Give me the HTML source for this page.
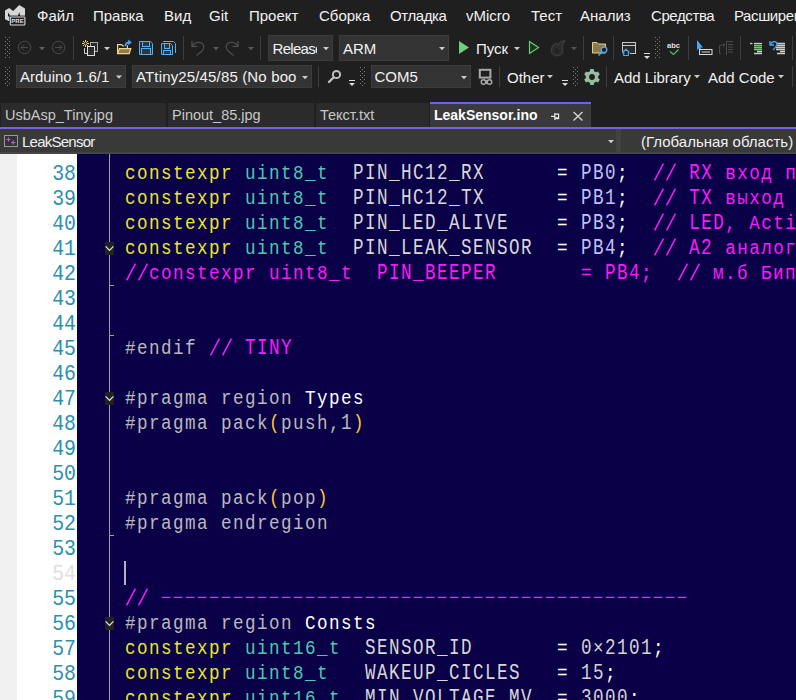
<!DOCTYPE html>
<html><head><meta charset="utf-8">
<style>
*{margin:0;padding:0;box-sizing:border-box}
html,body{width:796px;height:700px;overflow:hidden;background:#1f1f1f}
body{position:relative;font-family:"Liberation Sans",sans-serif;font-size:15px;color:#f1f1f1}
.a{position:absolute;white-space:pre;line-height:18px}
.cb{position:absolute;background:#333333;border:1px solid #3c3c3c;overflow:hidden}
.cb span{position:absolute;white-space:pre;line-height:18px}
.tab{position:absolute;top:103px;height:24px;background:#2b2b2b;overflow:hidden}
.tab span{position:absolute;white-space:pre;line-height:18px;color:#c8c8c8;font-size:14.5px}
svg{position:absolute;overflow:visible}
#ed{position:absolute;left:0;top:154px;width:796px;height:546px;background:#0a0048;overflow:hidden}
.ln{position:absolute;left:17px;width:59px;text-align:right;font-family:"Liberation Mono",monospace;font-size:22px;line-height:25px;height:25px;color:#2b91af;transform:scaleX(0.9);transform-origin:100% 0}
.cl{position:absolute;left:125px;font-family:"Liberation Mono",monospace;font-size:20px;line-height:25px;height:25px;white-space:pre;color:#d8d6d6;transform:scaleX(0.88);transform-origin:0 0;letter-spacing:1.6364px}
.u{display:inline-block;transform:scaleY(1.13);transform-origin:0 18px}.k{color:#e8e82a}.t{color:#4ec9b0}.c{color:#f81cf8}.p{color:#bababa}.w{color:#ffffff}.o{color:#ffc83c}.v{color:#c0c0fa}.n{color:#d6d2d2}.s{color:#ffffff}
</style></head><body>

<svg style="left:0;top:0" width="32" height="32" viewBox="0 0 32 32">
<path d="M5 10.4 L9.2 8 L13.2 11 L19.2 5 L25 8.4 L25 15.8 L9.8 15.8 L9.8 21.6 L5 19.2 Z" fill="#d6d6d6"/>
<path d="M8 12.6 L8 16.8 L10.2 15.6 Z M19.3 12.2 L17.8 15.9 L20.2 15.9 Z" fill="#1f1f1f"/>
<rect x="9.3" y="15.8" width="16.5" height="10" fill="#1f1f1f"/>
<rect x="10.3" y="17" width="14.6" height="8" rx="0.8" fill="#1f1f1f" stroke="#dcdcdc" stroke-width="1.1"/>
<text x="17.5" y="23.2" font-family="Liberation Sans" font-size="6" font-weight="bold" fill="#e0e0e0" text-anchor="middle">PRE</text>
</svg>
<div class="a" style="left:37px;top:7px;">Файл</div>
<div class="a" style="left:93px;top:7px;">Правка</div>
<div class="a" style="left:164px;top:7px;">Вид</div>
<div class="a" style="left:209px;top:7px;">Git</div>
<div class="a" style="left:249px;top:7px;">Проект</div>
<div class="a" style="left:319px;top:7px;">Сборка</div>
<div class="a" style="left:390px;top:7px;letter-spacing:-0.4px">Отладка</div>
<div class="a" style="left:466px;top:7px;">vMicro</div>
<div class="a" style="left:531px;top:7px;">Тест</div>
<div class="a" style="left:580px;top:7px;">Анализ</div>
<div class="a" style="left:651px;top:7px;letter-spacing:-0.4px">Средства</div>
<div class="a" style="left:734px;top:7px;letter-spacing:-0.4px">Расширения</div>
<svg style="left:0;top:0" width="796" height="100" fill="#7a7a7a">
<rect x="5" y="37" width="1" height="1"/><rect x="9" y="37" width="1" height="1"/><rect x="7" y="39" width="1" height="1"/><rect x="5" y="41" width="1" height="1"/><rect x="9" y="41" width="1" height="1"/><rect x="7" y="43" width="1" height="1"/><rect x="5" y="45" width="1" height="1"/><rect x="9" y="45" width="1" height="1"/><rect x="7" y="47" width="1" height="1"/><rect x="5" y="49" width="1" height="1"/><rect x="9" y="49" width="1" height="1"/><rect x="7" y="51" width="1" height="1"/><rect x="5" y="53" width="1" height="1"/><rect x="9" y="53" width="1" height="1"/><rect x="7" y="55" width="1" height="1"/><rect x="5" y="57" width="1" height="1"/><rect x="9" y="57" width="1" height="1"/>
<rect x="5" y="67" width="1" height="1"/><rect x="9" y="67" width="1" height="1"/><rect x="7" y="69" width="1" height="1"/><rect x="5" y="71" width="1" height="1"/><rect x="9" y="71" width="1" height="1"/><rect x="7" y="73" width="1" height="1"/><rect x="5" y="75" width="1" height="1"/><rect x="9" y="75" width="1" height="1"/><rect x="7" y="77" width="1" height="1"/><rect x="5" y="79" width="1" height="1"/><rect x="9" y="79" width="1" height="1"/><rect x="7" y="81" width="1" height="1"/><rect x="5" y="83" width="1" height="1"/><rect x="9" y="83" width="1" height="1"/><rect x="7" y="85" width="1" height="1"/>
<rect x="655" y="37" width="1" height="1"/><rect x="659" y="37" width="1" height="1"/><rect x="657" y="39" width="1" height="1"/><rect x="655" y="41" width="1" height="1"/><rect x="659" y="41" width="1" height="1"/><rect x="657" y="43" width="1" height="1"/><rect x="655" y="45" width="1" height="1"/><rect x="659" y="45" width="1" height="1"/><rect x="657" y="47" width="1" height="1"/><rect x="655" y="49" width="1" height="1"/><rect x="659" y="49" width="1" height="1"/><rect x="657" y="51" width="1" height="1"/><rect x="655" y="53" width="1" height="1"/><rect x="659" y="53" width="1" height="1"/><rect x="657" y="55" width="1" height="1"/><rect x="655" y="57" width="1" height="1"/><rect x="659" y="57" width="1" height="1"/>
<rect x="360" y="67" width="1" height="1"/><rect x="364" y="67" width="1" height="1"/><rect x="362" y="69" width="1" height="1"/><rect x="360" y="71" width="1" height="1"/><rect x="364" y="71" width="1" height="1"/><rect x="362" y="73" width="1" height="1"/><rect x="360" y="75" width="1" height="1"/><rect x="364" y="75" width="1" height="1"/><rect x="362" y="77" width="1" height="1"/><rect x="360" y="79" width="1" height="1"/><rect x="364" y="79" width="1" height="1"/><rect x="362" y="81" width="1" height="1"/><rect x="360" y="83" width="1" height="1"/><rect x="364" y="83" width="1" height="1"/><rect x="362" y="85" width="1" height="1"/>
<rect x="573" y="67" width="1" height="1"/><rect x="577" y="67" width="1" height="1"/><rect x="575" y="69" width="1" height="1"/><rect x="573" y="71" width="1" height="1"/><rect x="577" y="71" width="1" height="1"/><rect x="575" y="73" width="1" height="1"/><rect x="573" y="75" width="1" height="1"/><rect x="577" y="75" width="1" height="1"/><rect x="575" y="77" width="1" height="1"/><rect x="573" y="79" width="1" height="1"/><rect x="577" y="79" width="1" height="1"/><rect x="575" y="81" width="1" height="1"/><rect x="573" y="83" width="1" height="1"/><rect x="577" y="83" width="1" height="1"/><rect x="575" y="85" width="1" height="1"/>
</svg>
<svg style="left:0;top:0" width="796" height="160" fill="none" stroke="#4a4a4a" stroke-width="1">
<circle cx="24.5" cy="47.5" r="6.2"/>
<path d="M21 47.5 H28 M24 44.5 L21 47.5 L24 50.5"/>
<circle cx="58.5" cy="47.5" r="6.2"/>
<path d="M55 47.5 H62 M59 44.5 L62 47.5 L59 50.5"/>
</svg>
<svg style="left:0;top:0" width="796" height="160"><path d="M39.0 47 L45.0 47 L42 50.2 Z" fill="#606060"/></svg>
<div style="position:absolute;left:73px;top:36px;width:1px;height:24px;background:#3d3d3d"></div>
<svg style="left:0;top:0" width="796" height="160">
<rect x="90.5" y="42.5" width="7" height="9" fill="#2a2a2a" stroke="#a8a8a8" stroke-width="1"/>
<path d="M84.5 48 V53.5 H87.5" fill="none" stroke="#d0d0d0" stroke-width="1"/>
<rect x="87.5" y="46.5" width="7" height="9" fill="#2e2e2e" stroke="#e0e0e0" stroke-width="1"/>
<g stroke="#f5d57a" stroke-width="1"><path d="M85.5 40 V47 M82 43.5 H89 M83 41 L88 46 M88 41 L83 46"/></g>
<circle cx="85.5" cy="43.5" r="1.2" fill="#1f1f1f"/>
</svg>
<svg style="left:0;top:0" width="796" height="160"><path d="M104.0 47 L110.0 47 L107 50.2 Z" fill="#cccccc"/></svg>
<svg style="left:0;top:0" width="796" height="160">
<path d="M117.6 53.6 V44.6 H121.6 L122.8 45.8 H123.8" fill="none" stroke="#f5d58a" stroke-width="1.2"/>
<path d="M127.4 45.3 V48.3" stroke="#f5d58a" stroke-width="1.2"/>
<path d="M117.6 53.6 L119.4 48.6 H130.8 L129.2 53.6 Z" fill="#8b7a52" stroke="#f5d58a" stroke-width="1.2"/>
<path d="M125.4 46.2 C125.4 43.6 127 42.4 129.3 42.4" fill="none" stroke="#4aa8f0" stroke-width="1.7"/>
<path d="M128.2 39.6 L131.8 42.4 L128.2 45.2 Z" fill="#4aa8f0"/>
</svg>
<svg style="left:0;top:0" width="796" height="160"><path d="M139.5 41.5 H150.5 L152.5 43.5 V54.5 H139.5 Z" fill="#2a2a2a" stroke="#55b0f0" stroke-width="1"/>
<rect x="142.5" y="41.5" width="7" height="5" fill="#2e3640" stroke="#55b0f0" stroke-width="1"/>
<rect x="141.5" y="48.5" width="9" height="6" fill="#2e3640" stroke="#55b0f0" stroke-width="1"/><path d="M161.5 43.5 H170.5 L172.5 45.5 V54.5 H161.5 Z" fill="#2a2a2a" stroke="#55b0f0" stroke-width="1"/>
<rect x="164.5" y="43.5" width="5" height="5" fill="#2e3640" stroke="#55b0f0" stroke-width="1"/>
<rect x="163.5" y="50.5" width="7" height="4" fill="#2e3640" stroke="#55b0f0" stroke-width="1"/><path d="M163 41.5 H173.5 L175.5 43.5 V53" fill="none" stroke="#55b0f0" stroke-width="1"/></svg>
<div style="position:absolute;left:183px;top:36px;width:1px;height:24px;background:#3d3d3d"></div>
<svg style="left:0;top:0" width="796" height="160" fill="none" stroke="#555555" stroke-width="1.1">
<path d="M192 41 V46.5 H197.5"/>
<path d="M192.5 46 C195 41.5 201 41 203.5 45 C205 48 203 50.5 196.5 55.5"/>
<path d="M238 41 V46.5 H232.5"/>
<path d="M237.5 46 C235 41.5 229 41 226.5 45 C225 48 227 50.5 233.5 55.5"/>
</svg>
<svg style="left:0;top:0" width="796" height="160"><path d="M213.0 47 L219.0 47 L216 50.2 Z" fill="#5a5a5a"/></svg>
<svg style="left:0;top:0" width="796" height="160"><path d="M248.0 47 L254.0 47 L251 50.2 Z" fill="#5a5a5a"/></svg>
<div style="position:absolute;left:260px;top:36px;width:1px;height:24px;background:#3d3d3d"></div>
<div class="cb" style="left:268px;top:35px;width:65px;height:26px"><span style="left:3.5px;top:4px;width:44.3px;overflow:hidden;letter-spacing:-0.7px">Release</span></div>
<svg style="left:0;top:0" width="796" height="160"><path d="M323.0 47 L329.0 47 L326 50.2 Z" fill="#cccccc"/></svg>
<div class="cb" style="left:339px;top:35px;width:110px;height:26px"><span style="left:3px;top:4px">ARM</span></div>
<svg style="left:0;top:0" width="796" height="160"><path d="M439.0 47 L445.0 47 L442 50.2 Z" fill="#cccccc"/></svg>
<svg style="left:0;top:0" width="796" height="160">
<path d="M459 41 L469 47.5 L459 54 Z" fill="#6fcf78"/>
<path d="M529.5 41.5 L538.5 47.5 L529.5 53.5 Z" fill="#1e3322" stroke="#63d06c" stroke-width="1.2"/>
<path d="M554.5 44 C552 46 551.3 48.5 551.3 50.5 C551.3 53.8 553.8 55.8 557 55.8 C560.4 55.8 562.7 53.4 562.7 50.5 C562.7 48.5 562 47 562.5 45.3 C563 43.5 564 41.8 564.8 40.6 C562 40.8 559.5 42.2 558 44.8 C557.3 43.8 556 43.4 554.5 44 Z" fill="#2c2c2c" stroke="#3c3c3c" stroke-width="1.3"/><ellipse cx="556.8" cy="51" rx="2.3" ry="2.8" fill="#232323"/>
</svg>
<div class="a" style="left:476px;top:40px;">Пуск</div>
<svg style="left:0;top:0" width="796" height="160"><path d="M514.0 47 L520.0 47 L517 50.2 Z" fill="#cccccc"/></svg>
<svg style="left:0;top:0" width="796" height="160"><path d="M571.0 47 L577.0 47 L574 50.2 Z" fill="#555555"/></svg>
<div style="position:absolute;left:583px;top:36px;width:1px;height:24px;background:#3d3d3d"></div>
<svg style="left:0;top:0" width="796" height="160">
<path d="M592.5 42.5 H597 L598.5 44 H605.5 V53 H592.5 Z" fill="#8a7a50" stroke="#f0d084" stroke-width="1"/>
<circle cx="604" cy="49.8" r="2.8" fill="#1f1f1f" stroke="#4aa8f0" stroke-width="1.4"/>
<path d="M602 52 L598.5 55.5" stroke="#4aa8f0" stroke-width="1.4"/>
</svg>
<div style="position:absolute;left:613px;top:36px;width:1px;height:24px;background:#3d3d3d"></div>
<svg style="left:0;top:0" width="796" height="160">
<rect x="622.5" y="42.5" width="13" height="11" fill="#2a2a2a" stroke="#c8c8c8" stroke-width="1"/>
<path d="M622.5 45.5 H635.5" stroke="#c8c8c8" stroke-width="1"/>
<path d="M622 52.5 L626 49 L630 52.5 V56 H623 Z" fill="#1f1f1f"/>
<path d="M622.5 52.5 L626 49.3 L629.5 52.5 M623.7 51.8 V55.5 H628.3 V51.8" fill="none" stroke="#4aa8f0" stroke-width="1.2"/>
</svg>
<svg style="left:0;top:0" width="796" height="160"><rect x="644" y="53" width="6" height="1" fill="#dddddd"/><path d="M644 56 L650 56 L647 59 Z" fill="#dddddd"/></svg>
<svg style="left:0;top:0" width="796" height="160">
<text x="673.5" y="47.8" font-family="Liberation Sans" font-size="7.5" font-weight="bold" fill="#e0e0e0" text-anchor="middle">abc</text>
<path d="M670 51.5 L673.5 54.5 L678.5 49.5" fill="none" stroke="#50c060" stroke-width="1.2"/>
</svg>
<div style="position:absolute;left:688px;top:36px;width:1px;height:24px;background:#3d3d3d"></div>
<svg style="left:0;top:0" width="796" height="160">
<path d="M697 40 L703 47.5 L700.5 47.5 L701.5 50.5 L700 51 L699 48.5 L697 50 Z" fill="#4aa8f0"/>
<rect x="699.5" y="49.5" width="12.5" height="5" fill="#1f1f1f" stroke="#dddddd" stroke-width="1"/>
<path d="M701.5 52 H710" stroke="#dddddd" stroke-width="1"/>
</svg>
<svg style="left:0;top:0" width="796" height="160" fill="none" stroke="#4a4a4a" stroke-width="1">
<path d="M721 45.5 H719.5 V53.5 H721"/><path d="M721 45 H725 M723.5 43.5 L725 45 L723.5 46.5"/>
<path d="M726.5 41.5 V55 M726.5 41.5 H733 M728 44.5 H733 M728 47 H733 M728 49.5 H733 M728 52 H733"/>
</svg>
<div style="position:absolute;left:740px;top:36px;width:1px;height:24px;background:#3d3d3d"></div>
<svg style="left:0;top:0" width="796" height="160" stroke-width="1.3">
<path d="M750 43.5 H752.5" stroke="#cccccc"/><path d="M754 43.5 H762" stroke="#cccccc"/>
<path d="M754 45.5 H762 M754 47.5 H762 M754 49.5 H762" stroke="#6ccf6c"/>
<path d="M757 51.5 H762 M754 53.5 H762" stroke="#cccccc"/>
<path d="M777 43.5 H785 M777 45.5 H785 M776 47.5 H785 M776 49.5 H785 M780 51.5 H785 M777 53.5 H785" stroke="#cccccc"/>
<path d="M770.5 44 C772 41.5 775 41 776.5 42.5 C778 44.5 776 47 773 50" fill="none" stroke="#4aa8f0" stroke-width="1.3"/>
<path d="M770 41 V45 H774" fill="none" stroke="#4aa8f0" stroke-width="1.3"/>
</svg>
<div style="position:absolute;left:792px;top:36px;width:1px;height:24px;background:#3d3d3d"></div>
<div class="cb" style="left:16px;top:65px;width:110px;height:23px"><span style="left:3px;top:1.5px">Arduino 1.6/1</span></div>
<svg style="left:0;top:0" width="796" height="160"><path d="M116.0 75.5 L122.0 75.5 L119 78.7 Z" fill="#cccccc"/></svg>
<div class="cb" style="left:132px;top:65px;width:180px;height:23px"><span style="left:3px;top:1.5px;letter-spacing:0.15px">ATtiny25/45/85 (No boo</span></div>
<svg style="left:0;top:0" width="796" height="160"><path d="M302.0 76 L308.0 76 L305 79.2 Z" fill="#cccccc"/></svg>
<div style="position:absolute;left:318px;top:66px;width:1px;height:21px;background:#3d3d3d"></div>
<svg style="left:0;top:0" width="796" height="160">
<circle cx="336.5" cy="74.5" r="3.6" fill="none" stroke="#c0c0c0" stroke-width="2"/>
<path d="M333.5 77.5 L329 82" stroke="#c0c0c0" stroke-width="2.4" stroke-linecap="round"/>
</svg>
<svg style="left:0;top:0" width="796" height="160"><rect x="349" y="80" width="6" height="1" fill="#dddddd"/><path d="M349 83 L355 83 L352 86 Z" fill="#dddddd"/></svg>
<div class="cb" style="left:371px;top:65px;width:100px;height:23px"><span style="left:2.5px;top:1.5px">COM5</span></div>
<svg style="left:0;top:0" width="796" height="160"><path d="M461.0 76 L467.0 76 L464 79.2 Z" fill="#cccccc"/></svg>
<svg style="left:0;top:0" width="796" height="160">
<rect x="479.8" y="69.8" width="10.6" height="7.8" fill="#1f1f1f" stroke="#a8a8a8" stroke-width="2"/>
<circle cx="483.5" cy="82" r="2.3" fill="none" stroke="#a8a8a8" stroke-width="1.4"/>
<circle cx="489.5" cy="82" r="2.3" fill="none" stroke="#a8a8a8" stroke-width="1.4"/>
<ellipse cx="486.5" cy="82" rx="1.6" ry="2.1" fill="#a8a8a8"/>
</svg>
<div style="position:absolute;left:499px;top:66px;width:1px;height:21px;background:#3d3d3d"></div>
<div class="a" style="left:507px;top:69px;">Other</div>
<svg style="left:0;top:0" width="796" height="160"><path d="M547.0 75 L553.0 75 L550 78.2 Z" fill="#cccccc"/></svg>
<svg style="left:0;top:0" width="796" height="160"><rect x="562" y="80" width="6" height="1" fill="#dddddd"/><path d="M562 83 L568 83 L565 86 Z" fill="#dddddd"/></svg>
<svg style="left:0;top:0" width="796" height="160">
<path d="M590.30 68.98 L593.70 68.98 L594.12 71.17 L595.99 72.25 L598.09 71.51 L599.80 74.47 L598.11 75.92 L598.11 78.08 L599.80 79.53 L598.09 82.49 L595.99 81.75 L594.12 82.83 L593.70 85.02 L590.30 85.02 L589.88 82.83 L588.01 81.75 L585.91 82.49 L584.20 79.53 L585.89 78.08 L585.89 75.92 L584.20 74.47 L585.91 71.51 L588.01 72.25 L589.88 71.17 Z M594.9 77 A2.9 2.9 0 1 0 589.1 77 A2.9 2.9 0 1 0 594.9 77 Z" fill="#96bea6" fill-rule="evenodd"/>
</svg>
<div style="position:absolute;left:606px;top:66px;width:1px;height:21px;background:#3d3d3d"></div>
<div class="a" style="left:614px;top:69px;">Add Library</div>
<svg style="left:0;top:0" width="796" height="160"><path d="M694.0 75 L700.0 75 L697 78.2 Z" fill="#cccccc"/></svg>
<div class="a" style="left:708px;top:69px;">Add Code</div>
<svg style="left:0;top:0" width="796" height="160"><path d="M778.0 75 L784.0 75 L781 78.2 Z" fill="#cccccc"/></svg>
<div style="position:absolute;left:792px;top:66px;width:1px;height:21px;background:#3d3d3d"></div>
<div class="tab" style="left:1px;width:165px"><span style="left:4px;top:3px">UsbAsp_Tiny.jpg</span></div>
<div class="tab" style="left:168px;width:146px"><span style="left:4px;top:3px">Pinout_85.jpg</span></div>
<div class="tab" style="left:316px;width:113px"><span style="left:4px;top:3px">Текст.txt</span></div>
<div class="tab" style="left:430px;top:102px;width:161px;height:25px;background:#3a3a3a;border-top:2px solid #7160e8"><span style="left:4px;top:2px;color:#ffffff;font-weight:bold;font-size:14px">LeakSensor.ino</span></div>
<svg style="left:0;top:0" width="796" height="160">
<path d="M551 116.3 H554.5 M554.8 113 V120 M554.8 114.2 H558.6 V118.6 H554.8" fill="none" stroke="#e6e6e6" stroke-width="1.2"/><rect x="555" y="117.2" width="3.6" height="1.6" fill="#e6e6e6"/>
<path d="M573.5 112 L582.5 120.5 M582.5 112 L573.5 120.5" stroke="#d8d8d8" stroke-width="1.3"/>
</svg>
<div style="position:absolute;left:0;top:127px;width:796px;height:2px;background:#7160e8"></div>
<div style="position:absolute;left:0;top:129px;width:796px;height:25px;background:#393939"></div>
<div style="position:absolute;left:616px;top:129px;width:5px;height:23px;background:#424242"></div>
<div style="position:absolute;left:0;top:152px;width:796px;height:2px;background:#454545"></div>
<svg style="left:0;top:0" width="796" height="160">
<rect x="4.5" y="135.5" width="13" height="11" fill="#333" stroke="#9a9a9a" stroke-width="1"/>
<path d="M6.5 139.5 H10.5 M8.5 137.5 V141.5 M11 142.5 H15.5 M13.2 140.3 V144.7" stroke="#c060d8" stroke-width="1.1"/>
</svg>
<div class="a" style="left:22px;top:133px;letter-spacing:-0.75px">LeakSensor</div>
<svg style="left:0;top:0" width="796" height="160"><path d="M608.0 140 L614.0 140 L611 143.2 Z" fill="#cccccc"/></svg>
<div class="a" style="left:641px;top:133px;">(Глобальная область)</div>
<div id="ed">
<div style="position:absolute;left:0;top:0;width:17px;height:546px;background:#f0f0f0"></div>
<div style="position:absolute;left:17px;top:0;width:60px;height:546px;background:#ffffff"></div>
<div class="ln" style="top:8px"><span>38</span></div>
<div class="cl" style="top:7px"><span class="k">constexpr</span> <span class="t">uint8_t</span>  <span class="u">PIN_HC12_RX</span>      <span class="s">=</span> <span class="v"><span class="u">PB0</span></span><span class="s">;</span>  <span class="c">   <span class="u">RX</span> вход п</span></div>
<div class="ln" style="top:33px"><span>39</span></div>
<div class="cl" style="top:32px"><span class="k">constexpr</span> <span class="t">uint8_t</span>  <span class="u">PIN_HC12_TX</span>      <span class="s">=</span> <span class="v"><span class="u">PB1</span></span><span class="s">;</span>  <span class="c">   <span class="u">TX</span> выход</span></div>
<div class="ln" style="top:58px"><span>40</span></div>
<div class="cl" style="top:57px"><span class="k">constexpr</span> <span class="t">uint8_t</span>  <span class="u">PIN_LED_ALIVE</span>    <span class="s">=</span> <span class="v"><span class="u">PB3</span></span><span class="s">;</span>  <span class="c">   <span class="u">LED</span>, Acti</span></div>
<div class="ln" style="top:83px"><span>41</span></div>
<div class="cl" style="top:82px"><span class="k">constexpr</span> <span class="t">uint8_t</span>  <span class="u">PIN_LEAK_SENSOR</span>  <span class="s">=</span> <span class="v"><span class="u">PB4</span></span><span class="s">;</span>  <span class="c">   <span class="u">A2</span> аналог</span></div>
<div class="ln" style="top:108px"><span>42</span></div>
<div class="cl" style="top:107px"><span class="c">  constexpr uint8_t  <span class="u">PIN_BEEPER</span>       = <span class="u">PB4</span>;     м.б Бип</span></div>
<div class="ln" style="top:133px"><span>43</span></div>
<div class="ln" style="top:158px"><span>44</span></div>
<div class="ln" style="top:183px"><span>45</span></div>
<div class="cl" style="top:182px"><span class="p">#endif</span> <span class="c">   <span class="u">TINY</span></span></div>
<div class="ln" style="top:208px"><span>46</span></div>
<div class="ln" style="top:233px"><span>47</span></div>
<div class="cl" style="top:232px"><span class="p">#pragma region</span> <span class="w">Types</span></div>
<div class="ln" style="top:258px"><span>48</span></div>
<div class="cl" style="top:257px"><span class="p">#pragma pack</span><span class="o">(</span><span class="p">push,<span class="u">1</span></span><span class="o">)</span></div>
<div class="ln" style="top:283px"><span>49</span></div>
<div class="ln" style="top:308px"><span>50</span></div>
<div class="ln" style="top:333px"><span>51</span></div>
<div class="cl" style="top:332px"><span class="p">#pragma pack</span><span class="o">(</span><span class="p">pop</span><span class="o">)</span></div>
<div class="ln" style="top:358px"><span>52</span></div>
<div class="cl" style="top:357px"><span class="p">#pragma endregion</span></div>
<div class="ln" style="top:383px"><span>53</span></div>
<div class="ln" style="top:408px"><span style="color:#e0e0e0">54</span></div>
<div class="ln" style="top:433px"><span>55</span></div>
<div class="cl" style="top:432px"><span class="c">  </span></div>
<div class="ln" style="top:458px"><span>56</span></div>
<div class="cl" style="top:457px"><span class="p">#pragma region</span> <span class="w">Consts</span></div>
<div class="ln" style="top:483px"><span>57</span></div>
<div class="cl" style="top:482px"><span class="k">constexpr</span> <span class="t">uint16_t</span>  <span class="u">SENSOR_ID</span>       <span class="s">=</span> <span class="n"><span class="u">0</span>×<span class="u">2101</span></span><span class="s">;</span></div>
<div class="ln" style="top:508px"><span>58</span></div>
<div class="cl" style="top:507px"><span class="k">constexpr</span> <span class="t">uint8_t</span>   <span class="u">WAKEUP_CICLES</span>   <span class="s">=</span> <span class="n"><span class="u">15</span></span><span class="s">;</span></div>
<div class="ln" style="top:533px"><span>59</span></div>
<div class="cl" style="top:532px"><span class="k">constexpr</span> <span class="t">uint16_t</span>  <span class="u">MIN_VOLTAGE_MV</span>  <span class="s">=</span> <span class="n"><span class="u">3000</span></span><span class="s">;</span></div>
<svg style="left:0;top:0" width="796" height="546">
<defs><pattern id="dash" x="161.8" y="0" width="12" height="10" patternUnits="userSpaceOnUse"><rect x="0" y="0" width="8.6" height="10" fill="#ff22ff"/></pattern></defs>
<rect x="109" y="0" width="1" height="546" fill="#a0a0a0"/>
<rect x="109" y="131" width="5" height="1" fill="#a0a0a0"/>
<rect x="109" y="181" width="5" height="1" fill="#a0a0a0"/>
<rect x="109" y="381" width="5" height="1" fill="#a0a0a0"/>

<rect x="105" y="88" width="9" height="13" fill="#222222"/><path d="M105.6 92.4 L109.5 96.3 L113.4 92.4" fill="none" stroke="#e8e8e8" stroke-width="1.2"/>
<rect x="105" y="238" width="9" height="13" fill="#222222"/><path d="M105.6 242.4 L109.5 246.3 L113.4 242.4" fill="none" stroke="#e8e8e8" stroke-width="1.2"/>
<rect x="105" y="463" width="9" height="13" fill="#222222"/><path d="M105.6 467.4 L109.5 471.3 L113.4 467.4" fill="none" stroke="#e8e8e8" stroke-width="1.2"/>
<path d="M654.6 26.4 L663.4 9.6" stroke="#f81cf8" stroke-width="1.5"/>
<path d="M666.6 26.4 L675.4 9.6" stroke="#f81cf8" stroke-width="1.5"/>
<path d="M654.6 51.4 L663.4 34.6" stroke="#f81cf8" stroke-width="1.5"/>
<path d="M666.6 51.4 L675.4 34.6" stroke="#f81cf8" stroke-width="1.5"/>
<path d="M654.6 76.4 L663.4 59.6" stroke="#f81cf8" stroke-width="1.5"/>
<path d="M666.6 76.4 L675.4 59.6" stroke="#f81cf8" stroke-width="1.5"/>
<path d="M654.6 101.4 L663.4 84.6" stroke="#f81cf8" stroke-width="1.5"/>
<path d="M666.6 101.4 L675.4 84.6" stroke="#f81cf8" stroke-width="1.5"/>
<path d="M126.6 126.4 L135.4 109.6" stroke="#f81cf8" stroke-width="1.5"/>
<path d="M138.6 126.4 L147.4 109.6" stroke="#f81cf8" stroke-width="1.5"/>
<path d="M678.6 126.4 L687.4 109.6" stroke="#f81cf8" stroke-width="1.5"/>
<path d="M690.6 126.4 L699.4 109.6" stroke="#f81cf8" stroke-width="1.5"/>
<path d="M210.6 201.4 L219.4 184.6" stroke="#f81cf8" stroke-width="1.5"/>
<path d="M222.6 201.4 L231.4 184.6" stroke="#f81cf8" stroke-width="1.5"/>
<path d="M126.6 451.4 L135.4 434.6" stroke="#f81cf8" stroke-width="1.5"/>
<path d="M138.6 451.4 L147.4 434.6" stroke="#f81cf8" stroke-width="1.5"/>
<rect x="161.8" y="442.79999999999995" width="525" height="1.25" fill="url(#dash)"/>
<rect x="124.3" y="407" width="1.4" height="24" fill="#ffffff"/>
</svg>
</div>
</body></html>
